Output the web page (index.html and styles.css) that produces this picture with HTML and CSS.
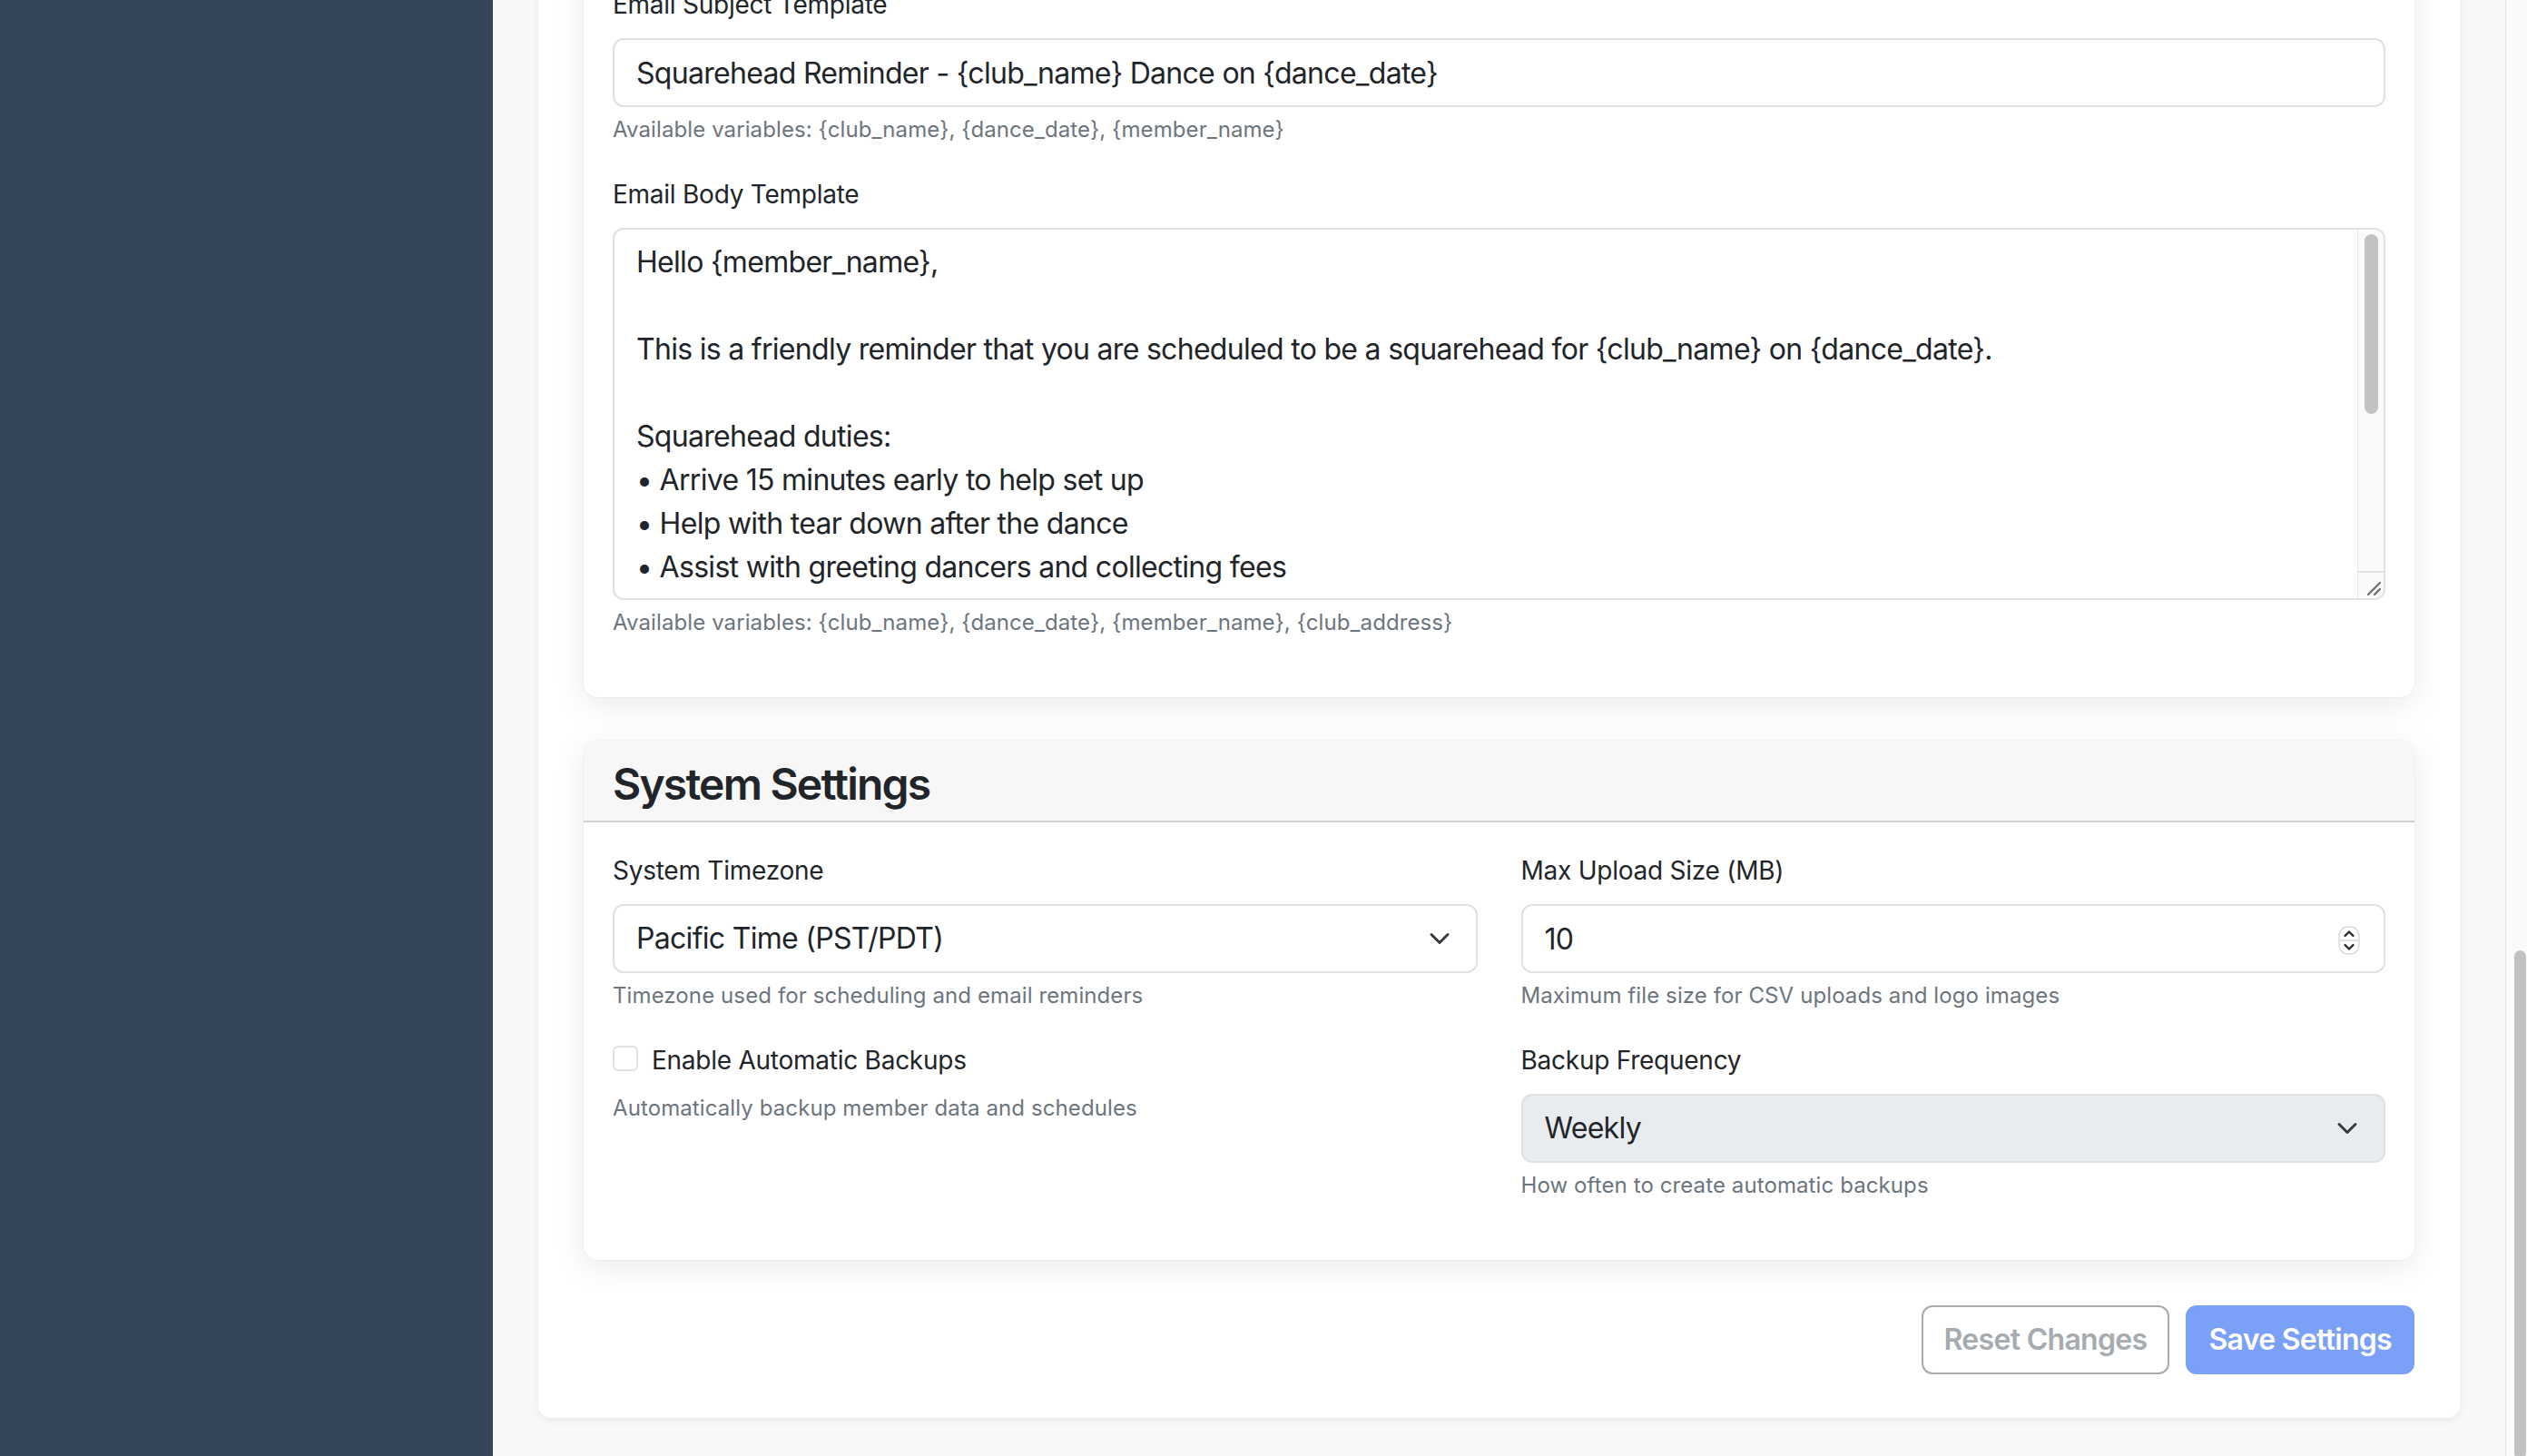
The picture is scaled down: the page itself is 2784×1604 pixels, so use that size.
FILE: index.html
```html
<!DOCTYPE html>
<html lang="en">
<head>
<meta charset="utf-8">
<title>Settings</title>
<link rel="stylesheet" href="styles.css">
</head>
<body>
<aside class="sidebar"></aside>
<main class="main">
  <div class="page-card">
    <section class="card card-email">
      <div class="card-body">
        <div class="form-group">
          <label class="form-label" for="subject">Email Subject Template</label>
          <input id="subject" class="form-control" type="text" value="Squarehead Reminder - {club_name} Dance on {dance_date}">
          <div class="form-text">Available variables: {club_name}, {dance_date}, {member_name}</div>
        </div>
        <div class="form-group">
          <label class="form-label" for="body">Email Body Template</label>
          <div class="textarea-wrap">
            <textarea id="body" class="form-control textarea" rows="8">Hello {member_name},

This is a friendly reminder that you are scheduled to be a squarehead for {club_name} on {dance_date}.

Squarehead duties:
• Arrive 15 minutes early to help set up
• Help with tear down after the dance
• Assist with greeting dancers and collecting fees

If you cannot attend, please find a replacement and let us know as soon as possible.

Thank you for your help!

{club_name}
{club_address}</textarea>
            <div class="ta-scrollbar">
              <div class="ta-track"><div class="ta-thumb"></div></div>
              <div class="ta-corner">
                <svg width="20" height="20" viewBox="0 0 20 20"><path d="M4 18 L17 5 M11 18 L17 12" stroke="#6b6b6b" stroke-width="2.2" stroke-linecap="round" fill="none"/></svg>
              </div>
            </div>
          </div>
          <div class="form-text">Available variables: {club_name}, {dance_date}, {member_name}, {club_address}</div>
        </div>
      </div>
    </section>

    <section class="card">
      <div class="card-header">
        <h2 class="card-title">System Settings</h2>
      </div>
      <div class="card-body">
        <div class="settings-grid">
          <div class="form-group">
            <label class="form-label" for="tz">System Timezone</label>
            <select id="tz" class="form-select">
              <option>Pacific Time (PST/PDT)</option>
            </select>
            <div class="form-text">Timezone used for scheduling and email reminders</div>
          </div>
          <div class="form-group">
            <label class="form-label" for="upload">Max Upload Size (MB)</label>
            <div class="number-wrap">
              <input id="upload" class="form-control" type="text" value="10">
              <svg class="spinner" width="24" height="32" viewBox="0 0 24 32">
                <rect x="1" y="1" width="22" height="30" rx="10" fill="#fff" stroke="#d9d9d9" stroke-width="1.5"/>
                <line x1="2" y1="16" x2="22" y2="16" stroke="#d9d9d9" stroke-width="1.5"/>
                <path d="M7.5 11 L12 6.5 L16.5 11" stroke="#2b2b2b" stroke-width="2.4" fill="none" stroke-linecap="round" stroke-linejoin="round"/>
                <path d="M7.5 21 L12 25.5 L16.5 21" stroke="#2b2b2b" stroke-width="2.4" fill="none" stroke-linecap="round" stroke-linejoin="round"/>
              </svg>
            </div>
            <div class="form-text">Maximum file size for CSV uploads and logo images</div>
          </div>
          <div class="form-group">
            <div class="form-check">
              <input id="backup" class="form-check-input" type="checkbox">
              <label class="form-check-label" for="backup">Enable Automatic Backups</label>
            </div>
            <div class="form-text check-text">Automatically backup member data and schedules</div>
          </div>
          <div class="form-group">
            <label class="form-label" for="freq">Backup Frequency</label>
            <select id="freq" class="form-select" disabled>
              <option>Weekly</option>
            </select>
            <div class="form-text">How often to create automatic backups</div>
          </div>
        </div>
      </div>
    </section>

    <div class="actions">
      <button class="btn btn-outline" type="button" disabled>Reset Changes</button>
      <button class="btn btn-primary" type="button" disabled>Save Settings</button>
    </div>
  </div>
</main>
<div class="page-scrollbar"><div class="page-thumb"></div></div>
</body>
</html>
```

FILE: styles.css
```css
* {
  box-sizing: border-box;
}

html, body {
  height: 100%;
}

body {
  margin: 0;
  display: flex;
  overflow: hidden;
  font-family: Inter, "Liberation Sans", sans-serif;
  color: #212529;
  background: #f7f8fa;
}

.sidebar {
  width: 543px;
  flex: 0 0 543px;
  background: #35465a;
}

.main {
  flex: 1;
  min-width: 0;
  padding: 0 50px 0 50px;
  overflow: hidden;
  background: #f7f8fa;
}

.page-card {
  margin-top: -96px;
  background: #fff;
  border-radius: 14px;
  padding: 48px 50px 48px 50px;
  box-shadow: 0 2px 10px rgba(0, 0, 0, 0.07);
}

.card {
  background: #fff;
  border-radius: 16px;
  box-shadow: 0 0 0 1px rgba(0, 0, 0, 0.025), 0 8px 34px rgba(0, 0, 0, 0.085);
  margin-bottom: 48px;
  overflow: hidden;
}

.card-header {
  background: #f7f7f7;
  border-bottom: 2px solid #d0d0d0;
  padding: 20px 32px 12px;
}

.card-title {
  margin: 0;
  font-size: 48px;
  line-height: 56px;
  font-weight: 600;
  letter-spacing: -1.8px;
  color: #212529;
}

.card-body {
  padding: 32px 32px 64px;
}

.form-group + .form-group {
  margin-top: 32px;
}

.settings-grid {
  display: grid;
  grid-template-columns: 1fr 1fr;
  column-gap: 48px;
  row-gap: 32px;
  align-items: start;
}

.settings-grid .form-group + .form-group {
  margin-top: 0;
}

.form-label {
  display: block;
  font-size: 28px;
  line-height: 42px;
  margin-bottom: 16px;
  letter-spacing: -0.25px;
  color: #212529;
}

.form-control,
.form-select {
  display: block;
  width: 100%;
  height: 76px;
  padding: 12px 24px;
  font-family: inherit;
  font-size: 32px;
  line-height: 48px;
  letter-spacing: -0.7px;
  color: #212529;
  background: #fff;
  border: 2px solid #dee2e6;
  border-radius: 12px;
  outline: none;
}

.form-select {
  -webkit-appearance: none;
  appearance: none;
  padding-right: 72px;
  background-image: url("data:image/svg+xml,%3csvg xmlns='http://www.w3.org/2000/svg' viewBox='0 0 16 16'%3e%3cpath fill='none' stroke='%23343a40' stroke-linecap='round' stroke-linejoin='round' stroke-width='2' d='m2 5 6 6 6-6'/%3e%3c/svg%3e");
  background-repeat: no-repeat;
  background-position: right 24px center;
  background-size: 32px 24px;
}

.form-select:disabled {
  background-color: #e9ecef;
  color: #212529;
  opacity: 1;
}

.textarea-wrap {
  position: relative;
}

.textarea {
  height: 410px;
  resize: none;
  overflow: hidden;
  padding-right: 60px;
  white-space: pre-wrap;
}

.ta-scrollbar {
  position: absolute;
  top: 2px;
  right: 2px;
  bottom: 2px;
  width: 29px;
  display: flex;
  flex-direction: column;
  background: #fafafa;
  border-left: 1px solid #e6e6e6;
  border-radius: 0 10px 10px 0;
}

.ta-track {
  flex: 1;
  padding-top: 5px;
}

.ta-thumb {
  margin-left: 7px;
  width: 15px;
  height: 198px;
  border-radius: 8px;
  background: #c2c2c2;
}

.ta-corner {
  height: 30px;
  border-top: 2px solid #e2e2e2;
  display: flex;
  align-items: flex-end;
  justify-content: flex-end;
  padding: 0 1px 2px 0;
}

.form-text {
  margin-top: 7px;
  font-size: 24px;
  line-height: 36px;
  letter-spacing: 0.1px;
  color: #6c757d;
}

.number-wrap {
  position: relative;
}

.spinner {
  position: absolute;
  right: 28px;
  top: 24px;
}

.form-check {
  display: flex;
  align-items: center;
  gap: 15px;
  min-height: 42px;
  margin-bottom: 5px;
}

.form-check-input {
  -webkit-appearance: none;
  appearance: none;
  margin: 0;
  width: 28px;
  height: 28px;
  flex: 0 0 28px;
  border: 2px solid #dee2e6;
  border-radius: 6px;
  background: #fff;
  position: relative;
  top: -2px;
}

.form-check-label {
  font-size: 28px;
  line-height: 42px;
  letter-spacing: -0.25px;
  color: #212529;
}

.check-text {
  margin-top: 14px;
}

.actions {
  display: flex;
  justify-content: flex-end;
  gap: 18px;
  margin-top: 50px;
}

.btn {
  font-family: inherit;
  font-size: 32px;
  font-weight: 600;
  line-height: 48px;
  letter-spacing: -0.7px;
  padding: 12px 23px;
  border-radius: 12px;
  border: 2px solid transparent;
  cursor: default;
}

.btn-outline {
  background: #fff;
  border-color: #a6abb0;
  color: #a6abb0;
}

.btn-primary {
  background: #7ba0f7;
  border-color: #7ba0f7;
  color: #fff;
}

.page-scrollbar {
  flex: 0 0 24px;
  width: 24px;
  background: #fafafa;
  border-left: 1px solid #e4e4e4;
  padding-top: 1047px;
  padding-left: 9px;
}

.page-thumb {
  width: 13px;
  height: 560px;
  border-radius: 7px;
  background: #c1c1c1;
}
```
